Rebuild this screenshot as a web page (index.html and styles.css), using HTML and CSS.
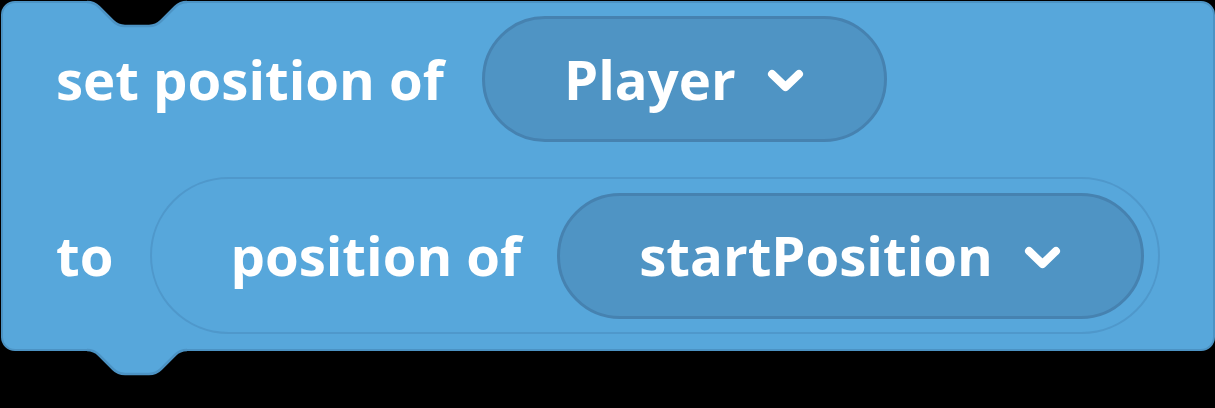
FILE: index.html
```html
<!DOCTYPE html>
<html lang="en">
<head>
  <meta charset="UTF-8" />
  <title>set position of block</title>
  <link rel="stylesheet" href="styles.css">
</head>
<body>
  <div class="block">
    <!-- notch cut into the top edge -->
    <svg class="notch" width="104" height="30" viewBox="-2 0 104 30">
      <path d="M0,0 V1 c6,0 9,2 12,5 l14,14 c3,3 6,5 12,5 h24 c6,0 9,-2 12,-5 l14,-14 c3,-3 6,-5 12,-5 V0 Z" fill="#000"/>
      <path d="M0,1 c6,0 9,2 12,5 l14,14 c3,3 6,5 12,5 h24 c6,0 9,-2 12,-5 l14,-14 c3,-3 6,-5 12,-5" fill="none" stroke="#4c93c4" stroke-width="2.5"/>
    </svg>

    <div class="row">
      <span class="label">set position of</span>
      <div class="dropdown">
        <span class="value">Player</span>
        <svg class="chevron" width="37" height="24" viewBox="0 0 37 24">
          <polyline points="5,5 18.5,18 32,5" />
        </svg>
      </div>
    </div>

    <div class="row row-to">
      <span class="label">to</span>
      <div class="reporter">
        <span class="label">position of</span>
        <div class="dropdown">
          <span class="value">startPosition</span>
          <svg class="chevron" width="37" height="24" viewBox="0 0 37 24">
            <polyline points="5,5 18.5,18 32,5" />
          </svg>
        </div>
      </div>
    </div>

    <!-- tab sticking out of the bottom edge -->
    <svg class="tab" width="104" height="30" viewBox="-2 0 104 30">
      <path d="M0,-2 V1 c6,0 9,2 12,5 l14,14 c3,3 6,5 12,5 h24 c6,0 9,-2 12,-5 l14,-14 c3,-3 6,-5 12,-5 V-2 Z" fill="#57a7db"/>
      <path d="M0,1 c6,0 9,2 12,5 l14,14 c3,3 6,5 12,5 h24 c6,0 9,-2 12,-5 l14,-14 c3,-3 6,-5 12,-5" fill="none" stroke="#4c93c4" stroke-width="2.5"/>
    </svg>
  </div>
</body>
</html>
```

FILE: styles.css
```css
* {
  box-sizing: border-box;
}

body, html {
  margin: 0;
  padding: 0;
  height: 100%;
  background: #000;
  font-family: 'Open Sans', sans-serif;
}

.block {
  position: relative;
  display: inline-flex;
  flex-direction: column;
  gap: 35px;
  margin: 1px 0 0 1px;
  padding: 13px 53px 15px 53px;
  background-color: #57a7db;
  border: 2px solid #4c93c4;
  border-radius: 14px;
}

.notch {
  position: absolute;
  top: -2px;
  left: 82px;
  overflow: visible;
}

.tab {
  position: absolute;
  top: 100%;
  left: 82px;
  overflow: visible;
}

.row {
  display: flex;
  align-items: center;
  gap: 38px;
}

.row-to {
  gap: 37px;
}

.label,
.value {
  color: #fff;
  font-size: 54.5px;
  font-weight: 700;
  line-height: 1;
  white-space: nowrap;
}

.dropdown {
  display: flex;
  align-items: center;
  gap: 31px;
  height: 126px;
  padding: 0 80px 0 79px;
  background-color: #4f94c4;
  border: 3px solid #4682b0;
  border-radius: 63px;
}

.reporter {
  display: flex;
  align-items: center;
  gap: 36px;
  height: 157px;
  padding: 0 14px 0 78px;
  border: 2.5px solid #4f98cb;
  border-radius: 79px;
}

.chevron {
  display: block;
  margin-top: 4px;
}

.chevron polyline {
  fill: none;
  stroke: #fff;
  stroke-width: 8;
  stroke-linecap: round;
  stroke-linejoin: round;
}
```
